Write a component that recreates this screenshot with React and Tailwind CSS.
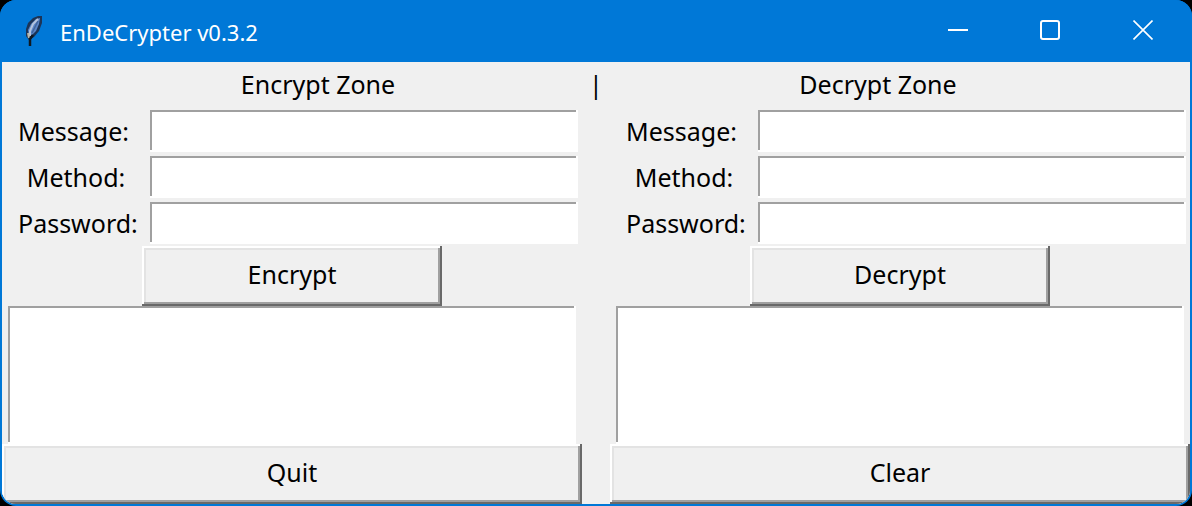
import { useState } from "react";

const raised =
  "bg-[#f0f0f0] pb-0.5 shadow-[inset_-2px_-2px_0_#696969,inset_2px_2px_0_#ffffff,inset_-4px_-4px_0_#a0a0a0,inset_4px_4px_0_#e3e3e3]";
const sunken =
  "bg-white outline-none shadow-[inset_-2px_-2px_0_#ffffff,inset_2px_2px_0_#a0a0a0]";

function FeatherIcon() {
  return (
    <svg className="h-8 w-5" viewBox="0 0 20 32" fill="none" aria-hidden="true">
      <path d="M5 25 2 21 2 14 4 8 9 3 14 1 18 1 18 8 15 16 10 22Z" fill="#1c3457" />
      <path d="M5 20 4 15 7 9 12 4 16 3 15 9 12 16 8 20Z" fill="#5b86c8" />
      <path d="M14 4 9 9 6 16 6 21" stroke="#b4c4de" strokeWidth="2" />
      <path d="M14 6 11 12 8 18" stroke="#41659c" strokeWidth="1.500" />
      <path d="M4 18 5 23" stroke="#b9b7a8" strokeWidth="2" />
      <path d="M9 20 6 24 6 31" stroke="#101820" strokeWidth="2.500" />
    </svg>
  );
}

function TitleBar() {
  return (
    <header className="flex h-[62px] items-start bg-[#0078d7] pr-0.5 text-white">
      <div className="flex h-[62px] flex-1 items-center gap-4 pl-6">
        <FeatherIcon />
        <h1 className="pt-0.5 text-[22px] leading-8">EnDeCrypter v0.3.2</h1>
      </div>
      <button type="button" aria-label="Minimize" className="flex h-[60px] w-[92px] items-center justify-center">
        <svg className="size-5" viewBox="0 0 20 20" stroke="currentColor" strokeWidth="2">
          <path d="M0 10H20" />
        </svg>
      </button>
      <button type="button" aria-label="Maximize" className="flex h-[60px] w-[92px] items-center justify-center">
        <svg className="size-5" viewBox="0 0 20 20" fill="none" stroke="currentColor" strokeWidth="2">
          <rect x="1" y="1" width="18" height="18" rx="2" />
        </svg>
      </button>
      <button type="button" aria-label="Close" className="flex h-[60px] w-[94px] items-center justify-center">
        <svg className="size-5" viewBox="0 0 20 20" stroke="currentColor" strokeWidth="1.600">
          <path d="M0.500 0.500 19.500 19.500M19.500 0.500 0.500 19.500" />
        </svg>
      </button>
    </header>
  );
}

function Field({ id, label, align, value, onChange }) {
  return (
    <div className="flex items-center pr-1">
      <label htmlFor={id} className={`w-[148px] px-4 leading-8 whitespace-nowrap ${align}`}>
        {label}
      </label>
      <input
        id={id}
        type="text"
        value={value}
        onChange={onChange}
        className={`h-[42px] min-w-0 flex-1 px-1 ${sunken}`}
      />
    </div>
  );
}

function Zone({ name, title, titlePadding, action, footer }) {
  const [values, setValues] = useState({ message: "", method: "", password: "" });
  const [output, setOutput] = useState("");
  const update = (key) => (event) => setValues({ ...values, [key]: event.target.value });

  return (
    <section className="flex min-w-0 flex-1 flex-col">
      <h2 className={`flex h-12 items-center justify-center pb-0.5 ${titlePadding}`}>{title}</h2>
      <div className="flex flex-col gap-1">
        <Field id={`${name}-message`} label="Message:" align="text-left" value={values.message} onChange={update("message")} />
        <Field id={`${name}-method`} label="Method:" align="text-center" value={values.method} onChange={update("method")} />
        <Field id={`${name}-password`} label="Password:" align="text-left" value={values.password} onChange={update("password")} />
      </div>
      <button type="button" className={`mx-auto mt-0.5 h-[60px] w-[300px] ${raised}`}>
        {action}
      </button>
      <textarea
        aria-label={`${title} output`}
        value={output}
        onChange={(event) => setOutput(event.target.value)}
        className={`mx-1.5 h-[138px] resize-none p-1 ${sunken}`}
      />
      <button type="button" className={`h-[60px] ${raised}`}>
        {footer}
      </button>
    </section>
  );
}

export default function App() {
  return (
    <div className="min-h-screen bg-black font-['Noto_Sans',sans-serif]">
      <div className="overflow-hidden rounded-2xl bg-[#0078d7]">
        <TitleBar />
        <main className="mx-0.5 mb-0.5 flex overflow-hidden rounded-b-[14px] bg-[#f0f0f0] text-[25px] text-black">
          <Zone name="encrypt" title="Encrypt Zone" titlePadding="pl-[52px]" action="Encrypt" footer="Quit" />
          <div className="flex h-12 w-7 items-center justify-center pb-0.5">|</div>
          <Zone name="decrypt" title="Decrypt Zone" titlePadding="pr-[44px]" action="Decrypt" footer="Clear" />
        </main>
      </div>
    </div>
  );
}
